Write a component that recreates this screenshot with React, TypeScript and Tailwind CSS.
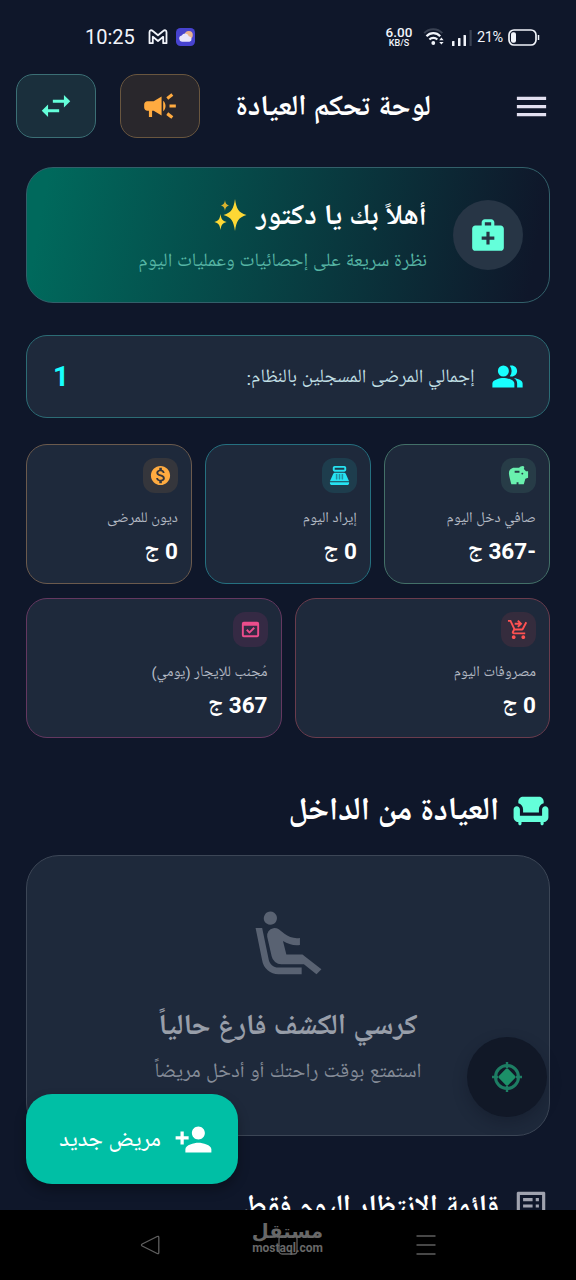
import React from 'react';
import {
  MdAirlineSeatReclineExtra,
  MdCampaign,
  MdChair,
  MdListAlt,
  MdMedicalServices,
  MdMenu,
  MdMonetizationOn,
  MdOutlineDomainVerification,
  MdPersonAdd,
  MdPointOfSale,
  MdSavings,
  MdShoppingCartCheckout,
  MdSwapHoriz,
} from 'react-icons/md';

function StatusBar() {
  return (
    <div dir="ltr" className="flex h-[74px] items-center pl-[85px] pr-9 text-[#f1f4fa]">
      <span className="w-[50px] whitespace-nowrap text-[20px] leading-none">10:25</span>
      <svg className="ml-[13px]" width="20" height="16" viewBox="0 0 20 16" fill="none" stroke="currentColor" strokeWidth="1.8" strokeLinejoin="round">
        <path d="M1.500 14.200V3.200c0-1.800 1.700-2.500 3-1.400L10 6.200l5.500-4.400c1.300-1.100 3-.4 3 1.400v11h-3.300V7.800L10 12 4.800 7.800v6.400z" />
      </svg>
      <svg className="ml-2" width="19" height="18" viewBox="0 0 19 18">
        <rect width="19" height="18" rx="4.500" fill="#4743cf" />
        <circle cx="12.800" cy="7" r="4" fill="#e9b38e" />
        <path d="M6 13.700a3.200 3.200 0 0 1-.3-6.300 4 4 0 0 1 7.100.8 2.800 2.800 0 0 1 .7 5.500z" fill="#e9e6fb" />
      </svg>

      <div className="ml-auto flex items-center">
        <div className="flex w-7 flex-col items-center whitespace-nowrap font-medium leading-none">
          <span className="text-[13.500px] leading-3">6.00</span>
          <span className="text-[9px] leading-[10px]">KB/S</span>
        </div>
        <svg className="ml-2.5" width="22" height="18" viewBox="0 0 22 18" fill="none" stroke="currentColor">
          <path d="M1.200 5.200C6-.2 14.500-.2 19.300 5.200" stroke="#3a4253" strokeWidth="2" />
          <path d="M3.500 8.200c3.700-4 10-4 13.700 0M6.400 11.600c2.200-2.300 5.700-2.300 7.900 0" strokeWidth="2.200" />
          <circle cx="10.300" cy="15" r="1.900" fill="currentColor" stroke="none" />
          <path d="M16.200 12.200l2.200-2.600 2.200 2.600zM16.200 14l2.200 2.600 2.200-2.600z" fill="currentColor" stroke="none" />
        </svg>
        <svg className="ml-1.5" width="21" height="17" viewBox="0 0 21 17" fill="currentColor">
          <rect x="1" y="12" width="2.500" height="5" rx=".6" />
          <rect x="7" y="9" width="2.500" height="8" rx=".6" />
          <rect x="12.500" y="6" width="2.500" height="11" rx=".6" />
          <rect x="18.500" y="1" width="2.200" height="16" rx=".6" fill="#3a4253" />
        </svg>
        <span className="ml-[5px] w-[27px] whitespace-nowrap pt-0.5 text-[14.500px] leading-none tracking-[-0.4px]">21%</span>
        <svg className="ml-1" width="32" height="17" viewBox="0 0 32 17">
          <rect x="1" y="1" width="27" height="15" rx="5" fill="none" stroke="currentColor" strokeWidth="1.700" />
          <rect x="3" y="3.200" width="5" height="10.600" rx="2" fill="currentColor" />
          <path d="M30.500 6v5" stroke="currentColor" strokeWidth="1.500" />
        </svg>
      </div>
    </div>
  );
}

function Header() {
  return (
    <header className="flex h-16 items-center pr-[25px] pl-4">
      <MdMenu className="size-[39px] text-[#e2e0f0]" />
      <h1 className="mr-[81px] whitespace-nowrap pt-1.5 text-[28.900px] font-bold leading-none">لوحة تحكم العيادة</h1>
      <div className="mr-auto flex gap-6">
        <button className="flex h-16 w-20 items-center justify-center rounded-[17px] border border-[#69563f] bg-[#29272c]">
          <MdCampaign className="size-[38px] text-[#ffab40]" />
        </button>
        <button className="flex h-16 w-20 items-center justify-center rounded-[17px] border border-[#3b6f75] bg-[#1a2f3c]">
          <MdSwapHoriz className="size-[38px] text-[#64ffda]" />
        </button>
      </div>
    </header>
  );
}

function Sparkles() {
  return (
    <svg className="mr-[9px] -mt-1.5" width="34" height="32" viewBox="0 0 34 32" fill="#fdd835">
      <path d="M22 0c1.500 10 3.300 13.500 11.500 16C25.300 18.500 23.500 22 22 32c-1.500-10-3.300-13.500-11.500-16C18.700 13.500 20.500 10 22 0z" />
      <path d="M7.500 15c.8 5 1.800 6.700 6.200 8-4.400 1.300-5.400 3-6.200 8-.8-5-1.800-6.700-6.200-8 4.400-1.300 5.400-3 6.200-8z" />
      <path d="M12 1c.5 3.500 1.300 4.600 4.300 5.500C13.300 7.400 12.500 8.500 12 12c-.5-3.500-1.300-4.600-4.300-5.500C10.700 5.600 11.500 4.500 12 1z" fill="#d9b22e" />
    </svg>
  );
}

function WelcomeCard() {
  return (
    <section className="mt-[29px] flex h-[136px] items-center rounded-[27px] border border-[#32606a] bg-linear-[100deg,#00695c_4%,#0f172a_96%] pr-[26px]">
      <div className="flex size-[70px] items-center justify-center rounded-full bg-[#273545]">
        <MdMedicalServices className="size-[38px] text-[#64ffda]" />
      </div>
      <div className="mr-[26px] pt-0.5">
        <div className="flex h-9 items-center">
          <h2 className="whitespace-nowrap pt-0.5 text-[28.800px] font-bold leading-none">أهلاً بك يا دكتور</h2>
          <Sparkles />
        </div>
        <p className="mt-[17px] whitespace-nowrap text-[19.200px] leading-none text-[#56b5a4]">نظرة سريعة على إحصائيات وعمليات اليوم</p>
      </div>
    </section>
  );
}

function PeopleIcon() {
  return (
    <svg width="33" height="33" viewBox="0 0 24 24" fill="#18ffff">
      <circle cx="9" cy="8" r="4" />
      <path d="M15 12c2.210 0 4-1.790 4-4s-1.790-4-4-4c-.470 0-.910.100-1.330.240a5.980 5.980 0 0 1 0 7.520c.420.140.860.240 1.330.240z" />
      <path d="M9 13c-2.670 0-8 1.340-8 4v3h16v-3c0-2.660-5.330-4-8-4zM16.670 13.130C18.040 14.060 19 15.320 19 17v3h4v-3c0-2.180-3.570-3.470-6.330-3.870z" />
    </svg>
  );
}

function TotalPatients() {
  return (
    <section className="mt-8 flex h-[83px] items-center rounded-[21px] border border-[#2c6c75] bg-[#1e293b] pr-[25px] pl-[26px]">
      <PeopleIcon />
      <span className="mr-4 whitespace-nowrap pt-1 text-[19.100px] leading-none text-[#c0dfe4]">إجمالي المرضى المسجلين بالنظام:</span>
      <span className="mr-auto text-[28px] font-bold leading-none text-[#18ffff]">1</span>
    </section>
  );
}

const topStats = [
  { label: 'صافي دخل اليوم', value: '-367', Icon: MdSavings, border: 'border-[#437068]', chip: 'bg-[#273c47]', icon: 'text-[#69f0ae]' },
  { label: 'إيراد اليوم', value: '0', Icon: MdPointOfSale, border: 'border-[#257080]', chip: 'bg-[#1e3d4d]', icon: 'text-[#26e3f2]' },
  { label: 'ديون للمرضى', value: '0', Icon: MdMonetizationOn, border: 'border-[#6b5a4d]', chip: 'bg-[#35363c]', icon: 'text-[#ffab40]' },
];

const bottomStats = [
  { label: 'مصروفات اليوم', value: '0', Icon: MdShoppingCartCheckout, border: 'border-[#6a3c4d]', chip: 'bg-[#352c3d]', icon: 'text-[#ff5252]' },
  { label: 'مُجنب للإيجار (يومي)', value: '367', Icon: MdOutlineDomainVerification, border: 'border-[#643860]', chip: 'bg-[#352a44]', icon: 'text-[#ec4d8c]' },
];

type Stat = (typeof topStats)[number];

function StatCard({ label, value, Icon, border, chip, icon }: Stat) {
  return (
    <div className={`flex h-[140px] flex-1 flex-col items-start rounded-[21px] border bg-[#1e293b] px-[13px] pt-[13px] ${border}`}>
      <div className={`flex size-[35px] items-center justify-center rounded-[12px] ${chip}`}>
        <Icon className={`size-[23px] ${icon}`} />
      </div>
      <div className="mt-[18px] whitespace-nowrap text-[14.800px] leading-4 text-[#b4bac4]">{label}</div>
      <div className="mt-2.5 flex gap-1.5 whitespace-nowrap text-[22.500px] font-bold leading-7">
        <span dir="ltr">{value.startsWith('-') ? `${value.slice(1)}-` : value}</span>
        <span>ج</span>
      </div>
    </div>
  );
}

function EmptyChair() {
  return (
    <section className="mt-6 flex h-[281px] flex-col items-center rounded-[33px] border border-[#3c4656] bg-[#1e293b] pt-[49px]">
      <MdAirlineSeatReclineExtra className="size-[79px] text-[#596272]" />
      <h3 className="mt-[26px] whitespace-nowrap text-[28.900px] font-bold leading-9 text-[#989ea9]">كرسي الكشف فارغ حالياً</h3>
      <p className="mt-[15px] whitespace-nowrap text-[20.700px] leading-6 text-[#858c98]">استمتع بوقت راحتك أو أدخل مريضاً</p>
    </section>
  );
}

function NavBar() {
  return (
    <nav dir="ltr" className="absolute inset-x-0 bottom-0 h-[70px] bg-black text-[#5f5f5f]">
      <div className="flex h-full items-center justify-between pr-[140px] pl-[140px]">
        <svg width="20" height="20" viewBox="0 0 20 20" fill="none" stroke="currentColor" strokeWidth="1.300" strokeLinejoin="round">
          <path d="M17.200 1.500Q18.800.8 18.800 2.500v15q0 1.700-1.600 1L2.200 11q-1.500-1 0-2z" />
        </svg>
        <svg width="20" height="20" viewBox="0 0 20 20" fill="none" stroke="currentColor" strokeWidth="1.300">
          <rect x="1" y="1" width="18" height="18" rx="3" />
        </svg>
        <svg width="20" height="20" viewBox="0 0 20 20" stroke="currentColor" strokeWidth="1.400">
          <path d="M.5 1h19M.5 10h19M.5 19h19" />
        </svg>
      </div>
      <div className="absolute top-[11px] left-[252px] flex w-[71px] flex-col items-center whitespace-nowrap font-bold text-[#686868]">
        <span className="font-['DejaVu_Sans'] text-[19.500px] leading-[22px]">مستقل</span>
        <span className="text-[12px] leading-[11px]">mostaql.com</span>
      </div>
    </nav>
  );
}

function App() {
  return (
    <div dir="rtl" className="relative h-[1280px] w-[576px] overflow-hidden bg-[#0f172a] font-['Roboto','Noto_Naskh_Arabic_UI','Noto_Sans_Arabic','DejaVu_Sans',sans-serif] text-white">
      <StatusBar />
      <Header />
      <main className="px-[26px]">
        <WelcomeCard />
        <TotalPatients />
        <div className="mt-[26px] flex gap-[13px]">
          {topStats.map((stat) => (
            <StatCard key={stat.label} {...stat} />
          ))}
        </div>
        <div className="mt-[14px] flex gap-[13px]">
          {bottomStats.map((stat) => (
            <StatCard key={stat.label} {...stat} />
          ))}
        </div>

        <div className="mt-[53px] flex h-10 items-center">
          <MdChair className="size-[38px] text-[#64ffda]" />
          <h2 className="mr-[13px] whitespace-nowrap pt-1 text-[32.100px] font-bold leading-none">العيادة من الداخل</h2>
        </div>
        <EmptyChair />
        <div className="mt-[50px] flex h-10 items-center">
          <MdListAlt className="size-[38px] -scale-x-100 text-[#a0a3af]" />
          <h2 className="mr-[13px] whitespace-nowrap pt-1.5 text-[28.200px] font-bold leading-none">قائمة الانتظار اليوم فقط</h2>
        </div>
      </main>

      <button className="absolute top-[1037px] left-[467px] flex size-20 items-center justify-center rounded-full bg-[#111827] shadow-[0_6px_14px_rgba(15,20,35,0.35)]">
        <svg width="32" height="32" viewBox="0 0 32 32" fill="none" stroke="#1d7d63">
          <circle cx="16" cy="16" r="11.500" strokeWidth="3" />
          <path d="M16 1v6M16 25v6M1 16h6M25 16h6" strokeWidth="2.400" />
          <rect x="9.500" y="9.500" width="13" height="13" rx="1.500" transform="rotate(45 16 16)" fill="#1c9068" stroke="none" />
        </svg>
      </button>

      <button className="absolute top-[1094px] left-[26px] flex h-[90px] w-[212px] items-center rounded-[26px] bg-[#00bfa5] pr-[25px] shadow-[0_6px_12px_rgba(0,0,0,0.3)]">
        <MdPersonAdd className="size-[39px]" />
        <span className="mr-[13px] whitespace-nowrap pt-1 text-[22.500px] font-medium leading-none">مريض جديد</span>
      </button>

      <NavBar />
    </div>
  );
}

export default App;
